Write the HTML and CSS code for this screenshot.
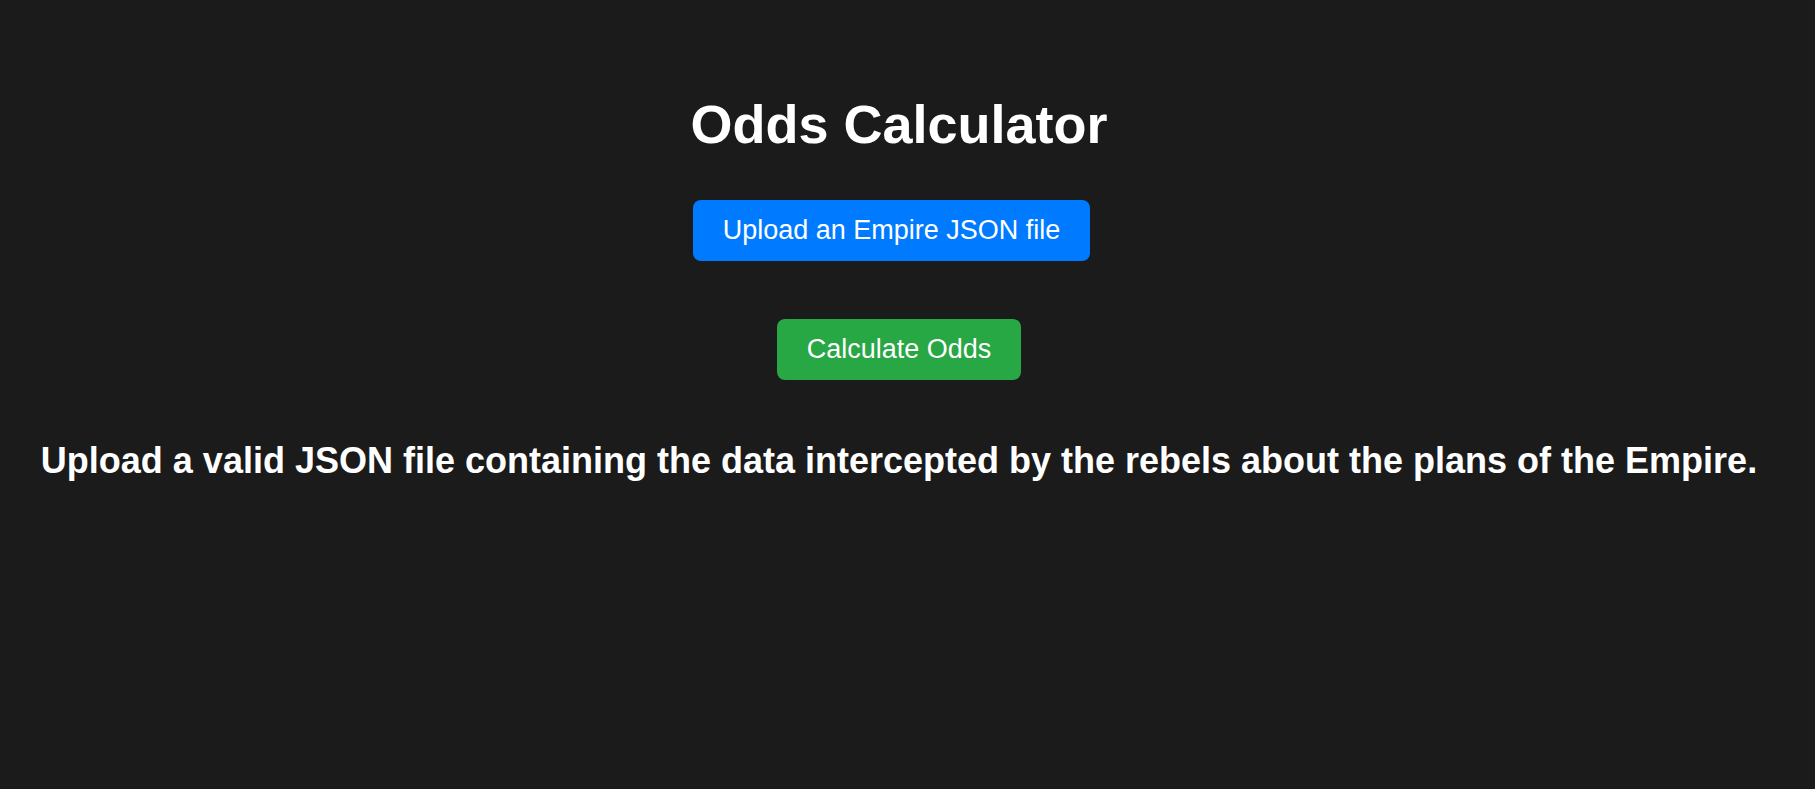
FILE: index.html
```html
<!DOCTYPE html>
<html lang="en">
<head>
<meta charset="utf-8">
<title>Odds Calculator</title>
<link rel="stylesheet" href="styles.css">
</head>
<body>
<main class="app">
  <h1 class="title">Odds Calculator</h1>
  <div class="upload-row">
    <label class="btn btn-upload">Upload an Empire JSON file</label>
  </div>
  <div class="calc-row">
    <button class="btn btn-calc" type="button">Calculate Odds</button>
  </div>
  <h2 class="message">Upload a valid JSON file containing the data intercepted by the rebels about the plans of the Empire.</h2>
</main>
</body>
</html>
```
FILE: styles.css
```css
html, body {
  margin: 0;
  padding: 0;
  background: #1b1b1b;
  height: 100%;
}

body {
  font-family: "Liberation Sans", Arial, sans-serif;
  color: #ffffff;
}

.app {
  box-sizing: border-box;
  width: 100%;
  padding: 93px 17px 0 0;
  display: flex;
  flex-direction: column;
  align-items: center;
}

.title {
  margin: 0;
  font-size: 54px;
  font-weight: bold;
  line-height: 62px;
}

.upload-row {
  margin-top: 45px;
  padding-right: 15px;
  display: flex;
}

.calc-row {
  margin-top: 58px;
  display: flex;
}

.btn {
  display: inline-block;
  box-sizing: border-box;
  height: 61px;
  padding: 0 30px;
  border: none;
  border-radius: 8px;
  font-family: "Liberation Sans", Arial, sans-serif;
  font-size: 27px;
  line-height: 61px;
  color: #ffffff;
  cursor: pointer;
}

.btn-upload {
  background: #007bff;
}

.btn-calc {
  background: #28a745;
}

.message {
  margin: 60px 0 0 0;
  font-size: 36px;
  font-weight: bold;
  line-height: 41px;
  text-align: center;
}
```
